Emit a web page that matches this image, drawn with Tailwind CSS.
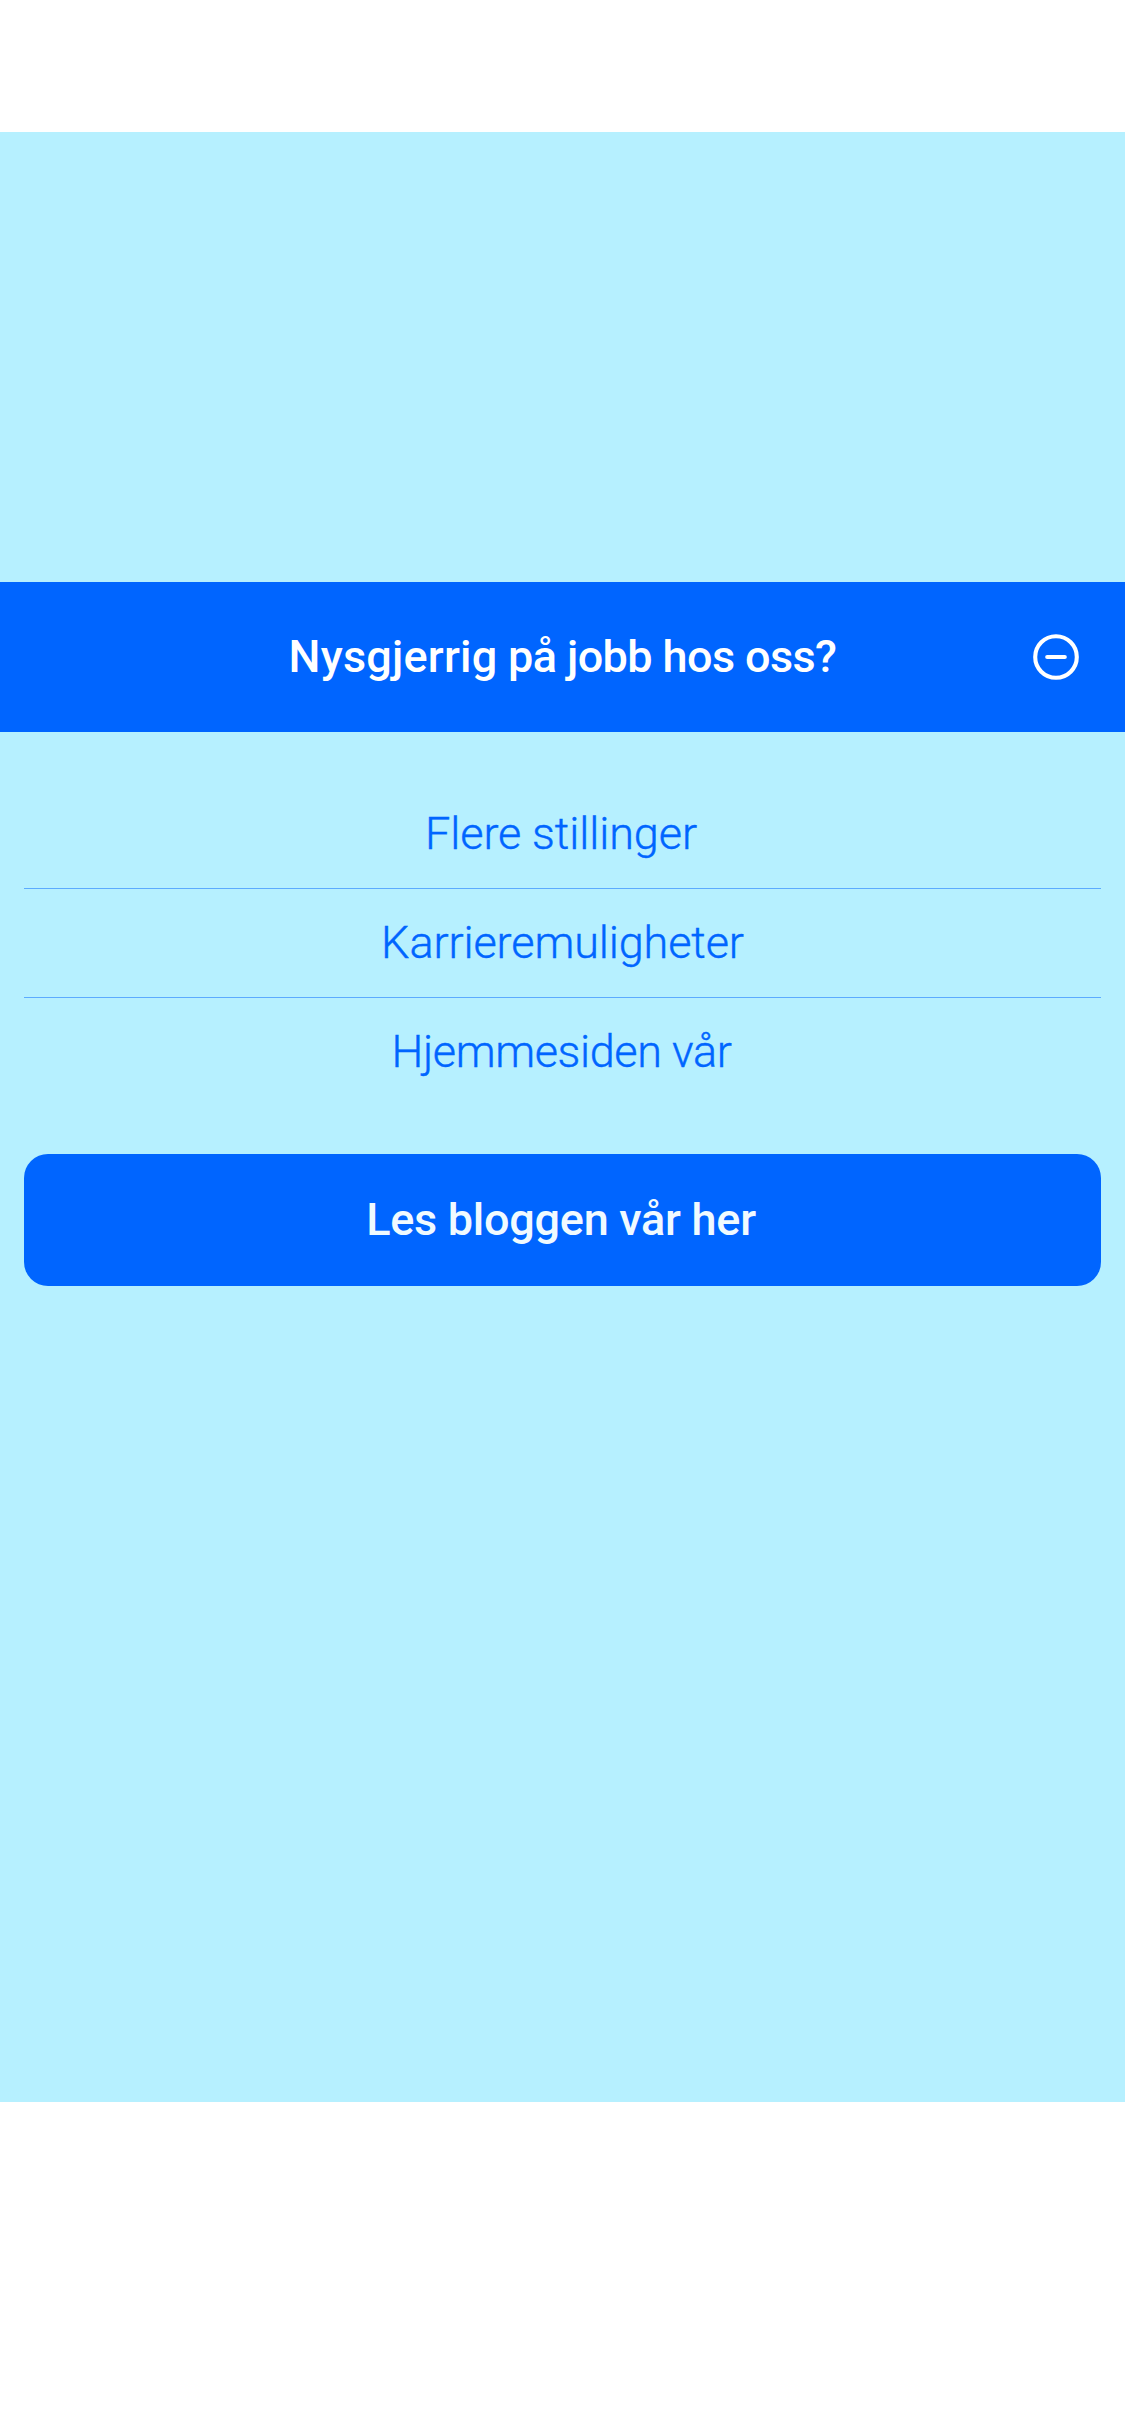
<!DOCTYPE html>
<html lang="nb">
<head>
<meta charset="utf-8">
<title>Nysgjerrig på jobb hos oss?</title>
<script src="https://cdn.jsdelivr.net/npm/@tailwindcss/browser@4"></script>
</head>
<body class="flex h-[2436px] w-[1125px] flex-col bg-white py-[132px] font-['Roboto',sans-serif] text-[45px]">
<main class="h-[1970px] bg-[#b6f0ff] pt-[450px] text-center text-[#0065ff]">
  <section>
    <div class="grid h-[150px] grid-cols-[1fr_auto_1fr] items-center bg-[#0065ff] text-white">
      <h2 class="col-start-2 font-medium tracking-[-0.28px]"><span class="tracking-[0.2px]">Nysgjerrig</span><span class="tracking-[-0.6px]"> på jobb hos oss?</span></h2>
      <button class="mr-[45px] justify-self-end" aria-label="Lukk">
        <svg class="block size-12" viewBox="0 0 48 48" fill="none" stroke="currentColor" stroke-width="4.1" stroke-linecap="round">
          <circle cx="24" cy="24" r="20.8"/>
          <path d="M15.2 24h17.6"/>
        </svg>
      </button>
    </div>
    <nav class="mt-12 flex flex-col px-6 font-light [-webkit-text-stroke:0.4px]">
      <a class="flex h-[109px] items-center justify-center border-b border-[#5cabff] pr-[3px] tracking-[-0.1px]">Flere stillinger</a>
      <a class="flex h-[109px] items-center justify-center border-b border-[#5cabff] tracking-[-0.12px]">Karrieremuligheter</a>
      <a class="flex h-[108px] items-center justify-center pr-[2px] tracking-[-0.4px]">Hjemmesiden vår</a>
    </nav>
    <div class="mt-12 px-6">
      <a class="flex h-[132px] items-center justify-center rounded-3xl bg-[#0065ff] pr-[3px] font-medium tracking-[-0.27px] text-[#f0faff]">Les bloggen vår her</a>
    </div>
  </section>
</main>
</body>
</html>
